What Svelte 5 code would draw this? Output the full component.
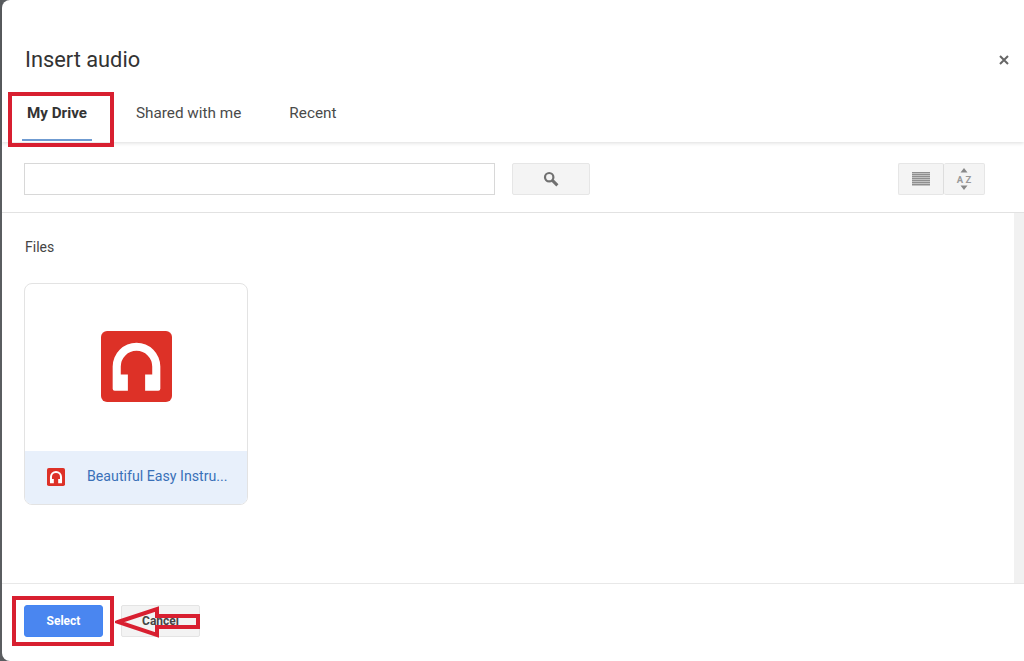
<script>
  const tabs = [
    { label: 'My Drive', active: true },
    { label: 'Shared with me', active: false },
    { label: 'Recent', active: false }
  ];
</script>

<div class="backdrop">
  <div class="dialog">
    <header class="head">
      <div class="title-row">
        <h1>Insert audio</h1>
        <button class="close" aria-label="Close">
          <svg viewBox="0 0 10 10" width="10" height="10"><path d="M1 1 9 9M9 1 1 9" stroke="#666" stroke-width="2" fill="none" /></svg>
        </button>
      </div>
      <nav class="tabs">
        {#each tabs as t}
          <div class="tab" class:active={t.active}>{t.label}</div>
        {/each}
      </nav>
    </header>

    <div class="toolbar">
      <input class="search" type="text" aria-label="Search" />
      <button class="btn search-btn" aria-label="Search">
        <svg viewBox="0 0 16 16" width="16" height="16">
          <circle cx="6.2" cy="6.2" r="4.2" fill="none" stroke="#707070" stroke-width="2.2" />
          <path d="M9.4 9.4 14.4 14.4" stroke="#707070" stroke-width="3" />
        </svg>
      </button>
      <div class="spacer"></div>
      <div class="group">
        <button class="btn view" aria-label="List view">
          <svg viewBox="0 0 18 14" width="18" height="14">
            <path d="M0 .7h18M0 2.7h18M0 4.7h18M0 6.7h18M0 8.7h18M0 10.7h18M0 12.7h18" stroke="#8f8f8f" stroke-width="1.5" />
          </svg>
        </button>
        <button class="btn sort" aria-label="Sort">
          <svg viewBox="0 0 16 22" width="16" height="22">
            <path d="M8 0 11.5 4.5H4.5Z M8 22 4.5 17.5H11.5Z" fill="#888" />
            <text x="8" y="14.5" text-anchor="middle" class="az">A Z</text>
          </svg>
        </button>
      </div>
    </div>

    <div class="body">
      <main class="content">
        <h2>Files</h2>
        <article class="card">
          <div class="thumb">
            <svg viewBox="0 0 70 70" width="71" height="71">
              <rect width="70" height="70" rx="6" fill="#dd3127" />
              <path d="M11.5 57V35a23.5 23.5 0 0 1 47 0V57a2 2 0 0 1-2 2H43.5V43H50.5V35a15.5 15.5 0 0 0-31 0V43H26.5V59H13.5a2 2 0 0 1-2-2Z" fill="#fff" />
            </svg>
          </div>
          <div class="meta">
            <svg class="mini" viewBox="0 0 70 70" width="18" height="18">
              <rect width="70" height="70" rx="7" fill="#dd3127" />
              <path d="M11.5 57V35a23.5 23.5 0 0 1 47 0V57a2 2 0 0 1-2 2H43.5V43H50.5V35a15.5 15.5 0 0 0-31 0V43H26.5V59H13.5a2 2 0 0 1-2-2Z" fill="#fff" />
            </svg>
            <span class="name">Beautiful Easy Instru...</span>
          </div>
        </article>
      </main>
      <div class="scroll"></div>
    </div>

    <footer class="foot">
      <button class="select">Select</button>
      <button class="cancel">Cancel</button>
    </footer>
  </div>

  <div class="mark mark-tab"></div>
  <div class="mark mark-select"></div>
  <svg class="arrow" viewBox="0 0 86 32" width="86" height="32">
    <path d="M3 16 42 3V10H83V21H42V29Z" fill="none" stroke="#d81f30" stroke-width="4" />
  </svg>
</div>

<style>
  :global(body) { margin: 0; background: #fff; }
  .backdrop {
    position: relative;
    width: 1024px;
    height: 661px;
    background: #5a5d60;
    overflow: hidden;
    font-family: Roboto, "Liberation Sans", sans-serif;
    color: #3c3c3c;
  }
  .dialog {
    margin-left: 2px;
    height: 661px;
    background: #fff;
    border-radius: 8px 0 0 8px;
    display: flex;
    flex-direction: column;
  }
  .head {
    height: 142px;
    box-sizing: border-box;
    box-shadow: 0 1px 4px rgba(0,0,0,.14);
    display: flex;
    flex-direction: column;
    position: relative;
  }
  .title-row {
    display: flex;
    justify-content: space-between;
    align-items: center;
    padding: 45px 15px 0 23px;
    height: 30px;
  }
  h1 { margin: 0; font-size: 21.8px; font-weight: 400; color: #333; line-height: 30px; }
  .close { background: none; border: 0; padding: 0; display: flex; }
  .tabs { display: flex; margin-top: 21px; padding-left: 20px; gap: 44px; }
  .tab { font-size: 15.3px; color: #4a4a4a; height: 45px; line-height: 34px; box-sizing: border-box; }
  .tab:last-child { margin-left: 4px; }
  .tab.active { font-size: 15.2px; font-weight: 700; color: #333; padding: 0 5px; border-bottom: 2px solid #6f9bd1; }
  .toolbar {
    height: 71px;
    box-sizing: border-box;
    border-bottom: 1px solid #e2e2e2;
    display: flex;
    align-items: flex-start;
    padding: 21px 39px 0 22px;
  }
  .search {
    width: 471px;
    height: 32px;
    box-sizing: border-box;
    border: 1px solid #d8d8d8;
    background: #fff;
    padding: 0;
    margin-right: 17px;
  }
  .btn {
    height: 32px;
    box-sizing: border-box;
    border: 1px solid #e6e6e6;
    border-radius: 2px;
    background: #f4f4f4;
    padding: 0;
    display: flex;
    align-items: center;
    justify-content: center;
  }
  .search-btn { width: 78px; }
  .spacer { flex: 1; }
  .group { display: flex; }
  .view { width: 46px; border-right-color: #ddd; }
  .sort { width: 41px; border-left: 0; }
  .az { font: 700 9.5px Roboto, sans-serif; fill: #999; }
  .body { flex: 1; display: flex; min-height: 0; }
  .content { flex: 1; padding: 26px 0 0 22px; }
  h2 { margin: 0 0 28px; padding-left: 1px; font-size: 14px; font-weight: 400; line-height: 16px; color: #444; }
  .card {
    width: 224px;
    height: 222px;
    box-sizing: border-box;
    border: 1px solid #e3e3e3;
    border-radius: 8px;
    overflow: hidden;
    display: flex;
    flex-direction: column;
  }
  .thumb { height: 167px; display: flex; align-items: center; justify-content: center; padding-bottom: 2px; box-sizing: border-box; }
  .meta {
    flex: 1;
    background: #e8f0fb;
    display: flex;
    align-items: center;
    padding-left: 22px;
    gap: 22px;
  }
  .mini { flex: none; margin-bottom: 2px; }
  .name { font-size: 14.2px; color: #3a70b8; white-space: nowrap; margin-bottom: 4px; }
  .scroll { width: 10px; background: #f1f1f1; }
  .foot {
    height: 78px;
    box-sizing: border-box;
    border-top: 1px solid #e8e8e8;
    display: flex;
    align-items: flex-start;
    padding: 21px 0 0 22px;
    gap: 18px;
  }
  .select {
    width: 79px;
    height: 32px;
    border: 1px solid #4285f4;
    border-radius: 3px;
    background: #4a86f0;
    color: #fff;
    font: 700 12px Roboto, sans-serif;
    padding: 0;
  }
  .cancel {
    width: 79px;
    height: 32px;
    border: 1px solid #e4e4e4;
    border-radius: 2px;
    background: #f3f3f3;
    color: #444;
    font: 700 12px Roboto, sans-serif;
    padding: 0;
  }
  .mark { position: absolute; border: 4px solid #d81f30; box-sizing: border-box; }
  .mark-tab { left: 8px; top: 92px; width: 106px; height: 55px; }
  .mark-select { left: 12px; top: 596px; width: 102px; height: 50px; }
  .arrow { position: absolute; left: 115px; top: 606px; }
</style>
